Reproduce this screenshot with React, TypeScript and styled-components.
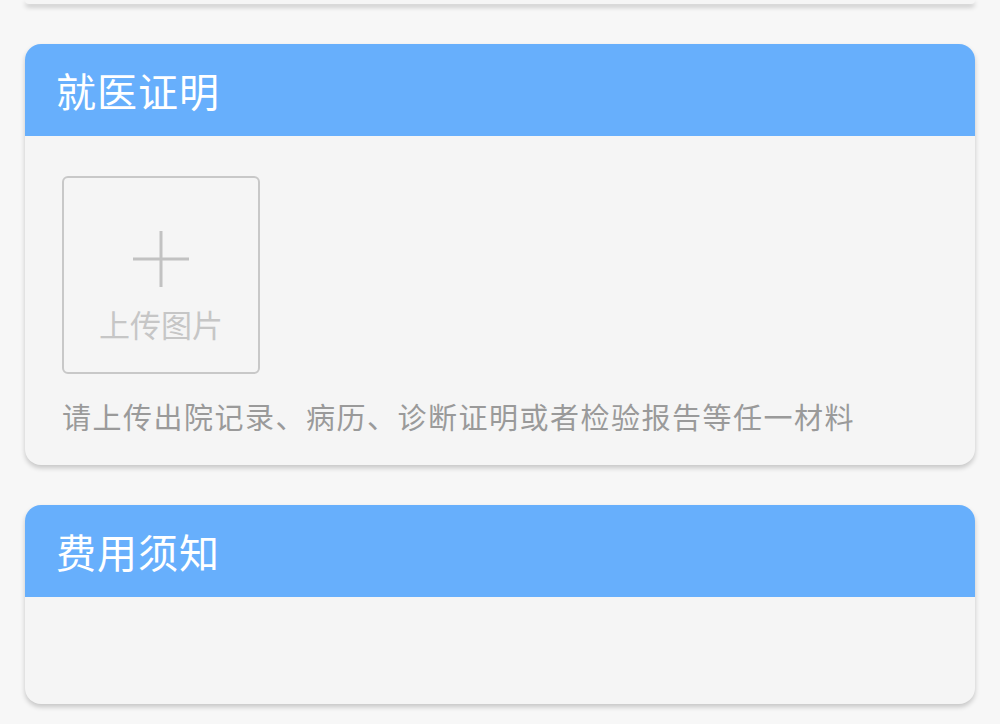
import React from "react";
import styled, { createGlobalStyle } from "styled-components";

const GlobalStyle = createGlobalStyle`
  html, body {
    margin: 0;
    padding: 0;
    background: #f7f7f7;
    font-family: "Noto Sans CJK SC", "Noto Sans", sans-serif;
  }
`;

const Page = styled.div`
  display: flex;
  flex-direction: column;
  gap: 40px;
  padding: 0 25px;
  overflow: hidden;
  height: 724px;
`;

const PrevCardBottom = styled.div`
  height: 4px;
  background: #f5f5f5;
  border-radius: 0 0 16px 16px;
  box-shadow: 0 3px 5px rgba(0, 0, 0, 0.22);
`;

const Card = styled.div`
  background: #f5f5f5;
  border-radius: 16px;
  overflow: hidden;
  box-shadow: 0 3px 5px rgba(0, 0, 0, 0.2);
  flex-shrink: 0;
`;

const CardHeader = styled.div`
  height: 92px;
  background: #67affc;
  display: flex;
  align-items: center;
  padding-left: 31px;
  color: #ffffff;
  font-size: 40px;
  line-height: 1;
  letter-spacing: 1px;
`;

const CardBody = styled.div<{ $minHeight?: number }>`
  padding: 40px 37px 29px;
  min-height: ${(p) => (p.$minHeight ? `${p.$minHeight}px` : "auto")};
  box-sizing: border-box;
`;

const UploadBox = styled.div`
  width: 198px;
  height: 198px;
  box-sizing: border-box;
  border: 2px solid #c8c8c8;
  border-radius: 6px;
  display: flex;
  flex-direction: column;
  align-items: center;
  padding-top: 52px;
`;

const UploadLabel = styled.div`
  margin-top: 20px;
  font-size: 31px;
  line-height: 1;
  color: #c6c6c6;
`;

const Hint = styled.div`
  margin-top: 22px;
  font-size: 29px;
  letter-spacing: 1.5px;
  line-height: 40px;
  color: #9a9a9a;
  white-space: nowrap;
`;

const PlusIcon = () => (
  <svg width="58" height="58" viewBox="0 0 58 58">
    <path d="M29 1v56M1 29h56" stroke="#c2c2c2" strokeWidth="3" fill="none" />
  </svg>
);

const App = () => {
  return (
    <>
      <GlobalStyle />
      <Page>
        <PrevCardBottom />
        <Card>
          <CardHeader>就医证明</CardHeader>
          <CardBody>
            <UploadBox>
              <PlusIcon />
              <UploadLabel>上传图片</UploadLabel>
            </UploadBox>
            <Hint>请上传出院记录、病历、诊断证明或者检验报告等任一材料</Hint>
          </CardBody>
        </Card>
        <Card>
          <CardHeader>费用须知</CardHeader>
          <CardBody $minHeight={107} />
        </Card>
      </Page>
    </>
  );
};

export default App;
